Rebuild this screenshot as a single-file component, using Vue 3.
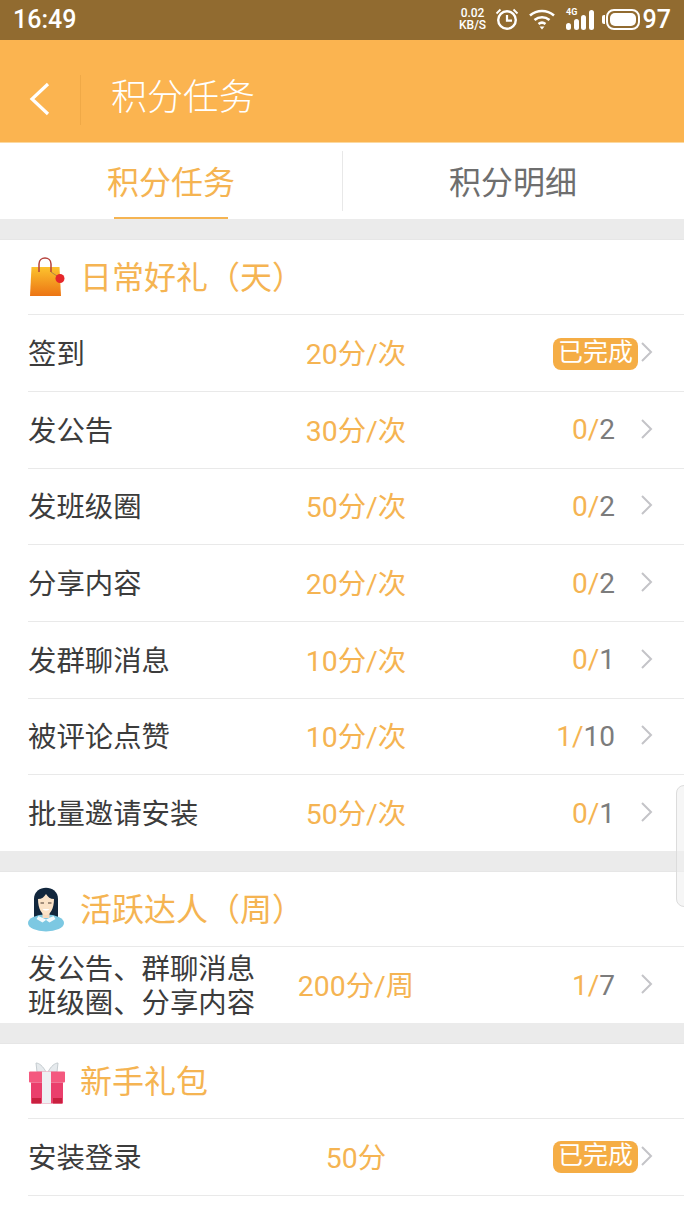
<template>
  <div class="page">
    <div class="status-bar">
      <span class="time">16:49</span>
      <div class="status-icons">
        <span class="speed"><i>0.02</i><i>KB/S</i></span>
        <svg class="ic-alarm" width="26" height="24" viewBox="0 0 26 24" fill="none" stroke="#fff">
          <circle cx="13" cy="13" r="8.8" stroke-width="2.4" />
          <path d="M13 8v5.6h5" stroke-width="2.2" />
          <path d="M2.5 6.5 6.5 2.5M23.5 6.5 19.5 2.5" stroke-width="1.8" />
        </svg>
        <svg class="ic-wifi" width="28" height="22" viewBox="0 0 28 22" fill="none" stroke="#fff" stroke-width="2.6">
          <path d="M2 7.5C9 1.5 19 1.5 26 7.5" />
          <path d="M6.5 12C11 8.3 17 8.3 21.5 12" />
          <path d="M10.5 16c2-1.5 5-1.5 7 0" />
          <path d="M14 21.5 11.5 18.5h5z" fill="#fff" stroke="none" />
        </svg>
        <span class="signal">
          <em>4G</em>
          <b v-for="h in [7, 11, 15, 20]" :key="h" :style="{ height: h + 'px' }"></b>
        </span>
        <span class="battery"><span></span></span>
        <span class="level">97</span>
      </div>
    </div>

    <header class="app-bar">
      <svg class="back" width="24" height="34" viewBox="0 0 24 34" fill="none" stroke="#fff" stroke-width="3.2">
        <path d="M20 2 4 17 20 32" />
      </svg>
      <span class="divider"></span>
      <h1>积分任务</h1>
    </header>

    <nav class="tabs">
      <div class="tab active"><span>积分任务</span></div>
      <div class="tab"><span>积分明细</span></div>
    </nav>

    <section v-for="group in groups" :key="group.title" class="group">
      <div class="group-head">
        <svg v-if="group.icon === 'bag'" class="group-icon" width="38" height="42" viewBox="0 0 38 42">
          <defs>
            <linearGradient id="bag" x1="0" y1="0" x2="0" y2="1">
              <stop offset="0" stop-color="#fcc32e" />
              <stop offset="1" stop-color="#ec7414" />
            </linearGradient>
          </defs>
          <path d="M3.5 11h28l1.5 29H2z" fill="url(#bag)" />
          <path d="M11 16V8c0-8 12-8 12 0v8" fill="none" stroke="#b5403a" stroke-width="1.5" />
          <path d="M23 16l6 4" stroke="#a98a45" stroke-width="1" />
          <circle cx="32" cy="22.5" r="4.5" fill="#e5262a" />
        </svg>
        <svg v-else-if="group.icon === 'girl'" class="group-icon" width="38" height="46" viewBox="0 0 38 46">
          <path d="M6 33V13C6-2 30-2 30 13v20z" fill="#12273d" />
          <ellipse cx="18" cy="37" rx="18" ry="8.5" fill="#7cc8e2" />
          <path d="M14.5 26h7v6h-7z" fill="#f6d9bd" />
          <path d="M10 13c4 0 6-2 8-5 2 3 4 5 8 5 0 10-4 16-8 16s-8-6-8-16z" fill="#fbe3c8" />
          <path d="M12.5 17h3.5M20 17h3.5" stroke="#4a3a30" stroke-width="1" />
          <path d="M14.5 23c2 2 5 2 7 0z" fill="#fff" />
          <path d="M10.500 30l7.500 3.500 7.500-3.500 2 3-6 3.500-3.500-2.500-3.500 2.500-6-3.500z" fill="#f3fafc" />
        </svg>
        <svg v-else class="group-icon" width="38" height="46" viewBox="0 0 38 46">
          <path d="M18 14C15 8 11 5 8 5l1 9zM20 14C23 8 27 5 30 5l-1 9z" fill="#e6eaed" stroke="#c5ccd0" />
          <rect x="1" y="13.5" width="36" height="11" rx="1" fill="#f4597f" />
          <rect x="3" y="24.5" width="32" height="21" fill="#ea3f6c" />
          <rect x="14" y="13.5" width="9" height="32" fill="#eef0f3" />
          <path d="M4 40h9v5.5H4zM25 40h9v5.5h-9z" fill="#c8203f" />
        </svg>
        <h2>{{ group.title }}</h2>
      </div>
      <div v-for="row in group.rows" :key="row.name" class="row" :class="{ tall: row.lines }">
        <div class="name">
          <template v-if="row.lines"><div v-for="l in row.lines" :key="l">{{ l }}</div></template>
          <template v-else>{{ row.name }}</template>
        </div>
        <div class="points">{{ row.points }}</div>
        <div class="progress">
          <span v-if="row.done" class="badge">已完成</span>
          <span v-else class="count"><span class="cur">{{ row.cur }}/</span>{{ row.total }}</span>
        </div>
        <svg class="chevron" width="14" height="22" viewBox="0 0 14 22" fill="none" stroke="#c4c4c8" stroke-width="2">
          <path d="M2 2l9 9-9 9" />
        </svg>
      </div>
    </section>
    <div class="list-end"></div>

    <div class="scroll-handle"></div>
  </div>
</template>

<script setup>
const groups = [
  {
    title: '日常好礼（天）',
    icon: 'bag',
    rows: [
      { name: '签到', points: '20分/次', done: true },
      { name: '发公告', points: '30分/次', cur: 0, total: 2 },
      { name: '发班级圈', points: '50分/次', cur: 0, total: 2 },
      { name: '分享内容', points: '20分/次', cur: 0, total: 2 },
      { name: '发群聊消息', points: '10分/次', cur: 0, total: 1 },
      { name: '被评论点赞', points: '10分/次', cur: 1, total: 10 },
      { name: '批量邀请安装', points: '50分/次', cur: 0, total: 1 },
    ],
  },
  {
    title: '活跃达人（周）',
    icon: 'girl',
    rows: [
      {
        name: 'weekly',
        lines: ['发公告、群聊消息', '班级圈、分享内容'],
        points: '200分/周',
        cur: 1,
        total: 7,
      },
    ],
  },
  {
    title: '新手礼包',
    icon: 'gift',
    rows: [{ name: '安装登录', points: '50分', done: true }],
  },
]
</script>

<style>
html,
body {
  margin: 0;
  background: #fff;
}
</style>

<style scoped>
.page {
  position: relative;
  width: 684px;
  height: 1216px;
  overflow: hidden;
  background: #fff;
  font-family: Roboto, "Noto Sans CJK SC", sans-serif;
}
.status-bar {
  height: 40px;
  background: #916b30;
  color: #fff;
  display: flex;
  align-items: center;
  justify-content: space-between;
  padding: 0 13px 2px;
  box-sizing: border-box;
}
.time {
  font-size: 25px;
  font-weight: 500;
}
.status-icons {
  display: flex;
  align-items: center;
}
.speed {
  display: flex;
  flex-direction: column;
  align-items: center;
  font-size: 12px;
  line-height: 12px;
  font-weight: 500;
  margin-right: 8px;
}
.speed i {
  font-style: normal;
}
.ic-alarm {
  margin-right: 8px;
}
.ic-wifi {
  margin-right: 10px;
}
.signal {
  position: relative;
  display: flex;
  align-items: flex-end;
  gap: 2.5px;
  height: 22px;
  margin-right: 12px;
}
.signal em {
  position: absolute;
  left: 0;
  top: -1px;
  font-style: normal;
  font-size: 9px;
  line-height: 10px;
  font-weight: 700;
}
.signal b {
  width: 5px;
  background: #fff;
  border-radius: 2.5px;
}
.battery {
  position: relative;
  width: 34px;
  height: 21px;
  border: 2px solid #fff;
  border-radius: 8px;
  padding: 2px;
  box-sizing: border-box;
  margin-right: 3px;
}
.battery::before {
  content: "";
  position: absolute;
  left: -6px;
  top: 4px;
  width: 3px;
  height: 9px;
  background: #fff;
  border-radius: 2px 0 0 2px;
}
.battery span {
  display: block;
  height: 100%;
  background: #fff;
  border-radius: 5px;
}
.level {
  font-size: 25px;
  font-weight: 500;
}
.app-bar {
  height: 103px;
  background: #fbb450;
  display: flex;
  align-items: center;
  box-sizing: border-box;
  border-bottom: 1px solid #fcd9a0;
}
.back {
  margin-left: 28px;
  margin-top: 16px;
}
.divider {
  width: 1px;
  height: 50px;
  background: #efa947;
  margin-left: 28px;
  margin-top: 18px;
}
.app-bar h1 {
  margin: 6px 0 0 30px;
  font-size: 36px;
  font-weight: 300;
  color: #fff;
}
.tabs {
  height: 76px;
  display: flex;
  background: #fff;
}
.tab {
  flex: 1;
  display: flex;
  justify-content: center;
  align-items: center;
  font-size: 32px;
  font-weight: 400;
  color: #6e6e6e;
  position: relative;
}
.tab span {
  margin-top: -2px;
}
.tab + .tab::before {
  content: "";
  position: absolute;
  left: 0;
  top: 8px;
  width: 1px;
  height: 60px;
  background: #e8e8e8;
}
.tab.active {
  color: #f5b452;
}
.tab.active::after {
  content: "";
  position: absolute;
  left: 114px;
  bottom: 0;
  width: 114px;
  height: 2px;
  background: #f5b452;
}
.group {
  background: #fff;
  border-top: 20px solid #ebebeb;
}
.group-head {
  height: 75.3px;
  box-sizing: border-box;
  border-top: 1px solid #e6e6e6;
  display: flex;
  align-items: center;
  padding-left: 28px;
}
.group-icon {
  flex: none;
}
.group-head h2 {
  margin: 0 0 0 14px;
  padding-bottom: 4px;
  font-size: 32px;
  font-weight: 400;
  color: #f5b452;
}
.row {
  margin-left: 28px;
  height: 76.67px;
  box-sizing: border-box;
  border-top: 1px solid #e9e9e9;
  display: grid;
  grid-template-columns: 228px 200px 159px 1fr;
  align-items: center;
}
.name {
  font-size: 28.4px;
  font-weight: 400;
  color: #3c3c3c;
  margin-top: -3px;
}
.row.tall .name {
  line-height: 34px;
  margin-top: 4px;
}
.points {
  text-align: center;
  font-size: 28.4px;
  font-weight: 400;
  color: #f5b452;
  margin-top: -3px;
}
.progress {
  text-align: right;
  font-size: 28px;
  font-weight: 400;
  color: #7c7c7c;
}
.cur {
  color: #f5b452;
}
.badge {
  display: inline-block;
  width: 85px;
  height: 32px;
  line-height: 30px;
  margin-right: -23px;
  text-align: center;
  background: #f5ad45;
  border-radius: 8px;
  color: #fff;
  font-size: 25px;
  font-weight: 400;
  position: relative;
  top: -1px;
}
.chevron {
  justify-self: start;
  margin-left: 25px;
  margin-top: -2px;
}
.list-end {
  margin-left: 28px;
  border-top: 1px solid #e9e9e9;
}
.scroll-handle {
  position: absolute;
  right: -8px;
  top: 785px;
  width: 14px;
  height: 120px;
  border: 1px solid #dcdcdc;
  border-radius: 8px;
  background: rgba(240, 240, 240, 0.6);
}
</style>
